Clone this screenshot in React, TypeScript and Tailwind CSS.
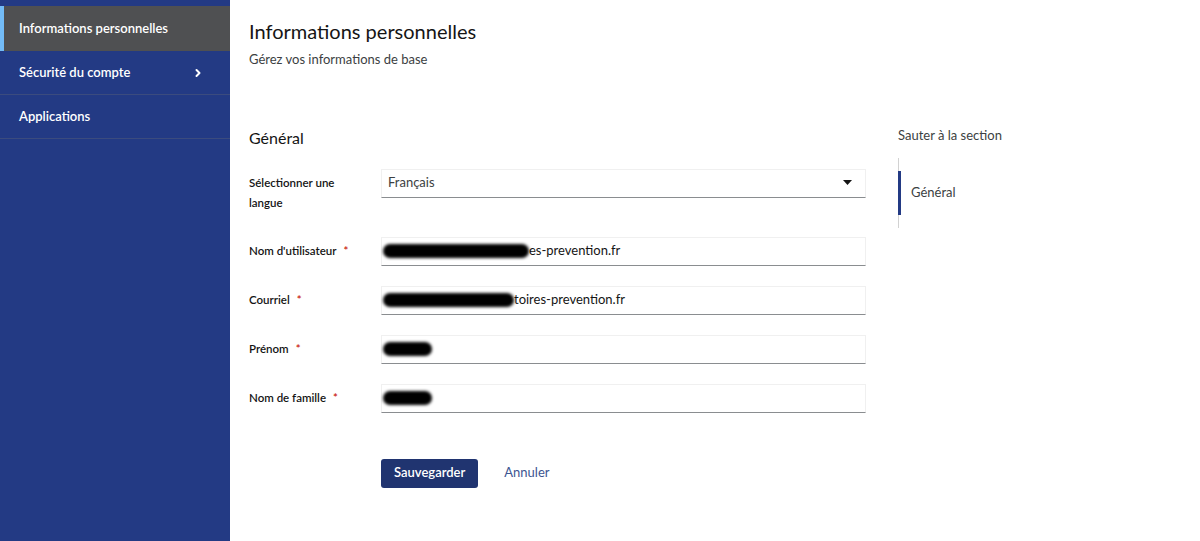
import { ChevronRight } from "lucide-react";

const font = { fontFamily: "Lato, 'Noto Sans', sans-serif" };

function Blob({ w }: { w: number }) {
  return (
    <span
      className="inline-block h-[14px] rounded-full bg-black blur-[1.5px] shrink-0"
      style={{ width: w }}
    />
  );
}

function Field({
  label,
  required,
  children,
}: {
  label: string;
  required?: boolean;
  children?: React.ReactNode;
}) {
  return (
    <div className="flex items-center">
      <label className="w-[132px] text-[11.5px] font-semibold text-[#151515]">
        {label}
        {required && <span className="ml-[7px] text-[#c9190b]">*</span>}
      </label>
      <div className="flex h-[29px] w-[485px] items-center border border-[#f0f0f0] border-b-[#8a8d90] pl-[1px] text-[13px] text-[#151515]">
        {children}
      </div>
    </div>
  );
}

export default function App() {
  return (
    <div className="flex h-[541px] w-[1200px] bg-white" style={font}>
      <aside className="w-[230px] shrink-0 bg-[#233a84] pt-[6px] text-white">
        <div className="flex h-[45px] items-center border-l-[4px] border-[#73bcf7] bg-[#4f5052] pl-[15px] text-[13px] font-semibold">
          Informations personnelles
        </div>
        <div className="flex h-[44px] items-center justify-between border-b border-[#3b4b7e] pl-[19px] pr-[26px] text-[13px] font-semibold">
          Sécurité du compte
          <ChevronRight size={12} strokeWidth={4} />
        </div>
        <div className="flex h-[44px] items-center border-b border-[#3b4b7e] pl-[19px] text-[13px] font-semibold">
          Applications
        </div>
      </aside>

      <main className="flex-1 pl-[19px]">
        <h1 className="mt-[16px] text-[20px] text-[#151515]">Informations personnelles</h1>
        <p className="mt-[4px] text-[13px] text-[#3c3f42]">Gérez vos informations de base</p>

        <div className="mt-[56px] flex">
          <div className="w-[649px]">
            <h2 className="text-[16px] text-[#151515]">Général</h2>

            <div className="mt-[19px] flex items-start">
              <label className="w-[132px] pt-[4px] text-[11.5px] font-semibold leading-[20px] text-[#151515]">
                Sélectionner une
                <br />
                langue
              </label>
              <div className="flex h-[29px] w-[485px] items-center justify-between border border-[#f0f0f0] border-b-[#8a8d90] pl-[6px] pr-[13px] text-[13px] text-[#3c3f42]">
                Français
                <svg width="9" height="6" viewBox="0 0 9 6">
                  <path d="M0 0h9L4.5 5z" fill="#151515" />
                </svg>
              </div>
            </div>

            <div className="mt-[24px] flex flex-col gap-[20px]">
              <Field label="Nom d'utilisateur" required>
                <Blob w={146} />
                <span>es-prevention.fr</span>
              </Field>
              <Field label="Courriel" required>
                <Blob w={131} />
                <span>toires-prevention.fr</span>
              </Field>
              <Field label="Prénom" required>
                <Blob w={49} />
              </Field>
              <Field label="Nom de famille" required>
                <Blob w={49} />
              </Field>
            </div>

            <div className="mt-[46px] flex items-center gap-[26px] pl-[132px]">
              <button className="h-[29px] rounded-[3px] bg-[#203470] px-[13px] text-[13px] font-semibold text-white">
                Sauvegarder
              </button>
              <span className="text-[13px] text-[#3d5591]">Annuler</span>
            </div>
          </div>

          <div>
            <div className="text-[13px] text-[#3c3f42]">Sauter à la section</div>
            <div className="mt-[13px] border-l border-[#d2d2d2] py-[13px]">
              <div className="-ml-[1px] flex h-[44px] items-center border-l-[3px] border-[#233a84] pl-[10px] text-[13px] text-[#3c3f42]">
                Général
              </div>
            </div>
          </div>
        </div>
      </main>
    </div>
  );
}
